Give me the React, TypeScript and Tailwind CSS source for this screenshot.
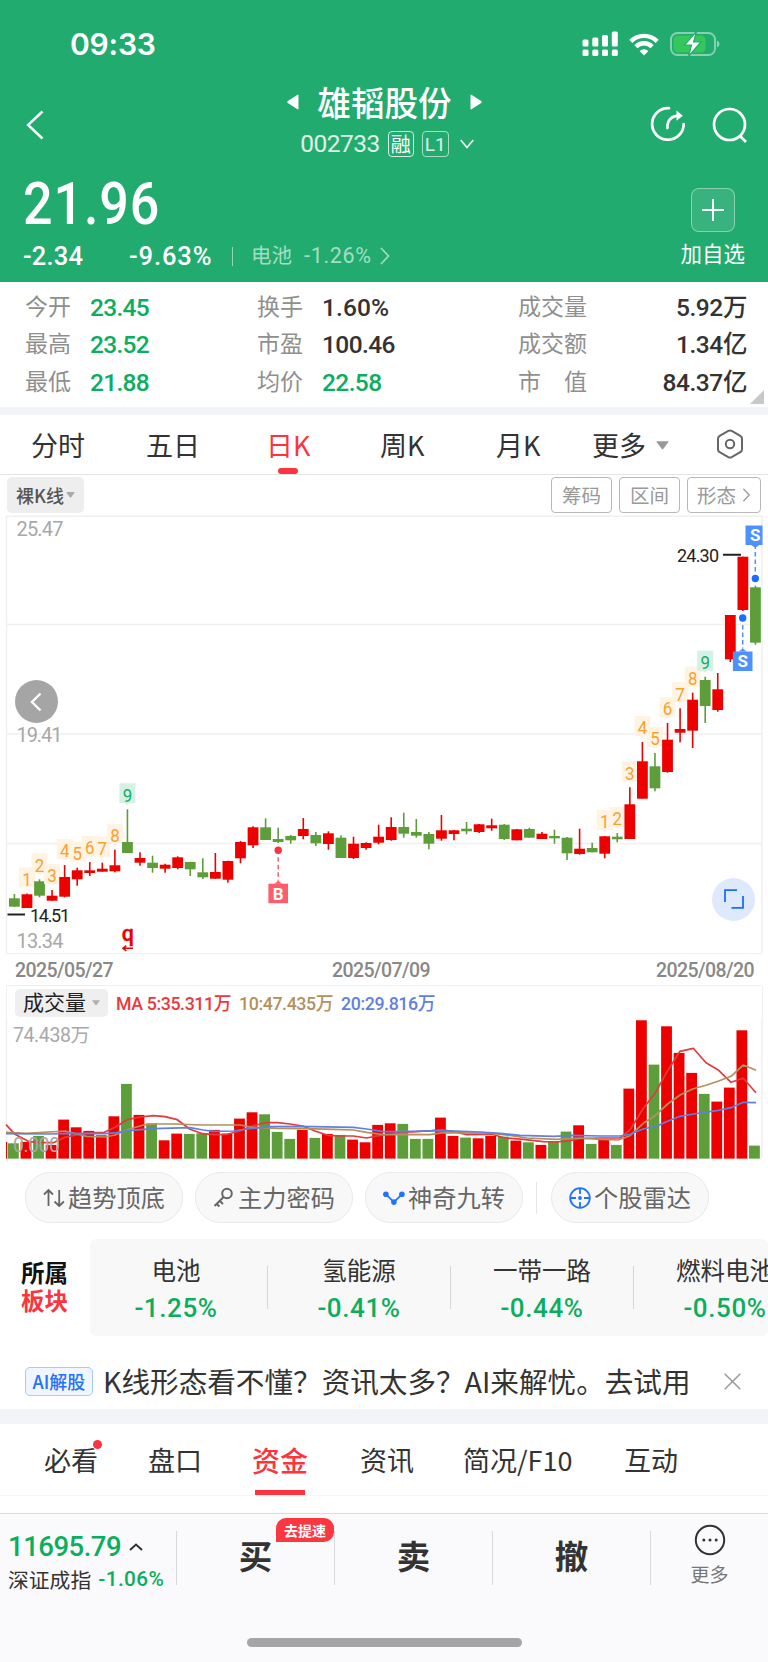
import type { ReactNode } from "react";
import clsx from "clsx";

type Candle = [
  color: "r" | "g",
  high: number,
  top: number,
  bottom: number,
  low: number,
  volume: number,
  count?: number,
];

// high / body top / body bottom / low / volume height, plus the nine-turn count
const candles: Candle[] = [
  ["g", 894, 898.3, 906.7, 907, 15.3],
  ["r", 893.5, 894.3, 908, 908, 16.7, 1],
  ["g", 879.3, 881.3, 895.7, 897.3, 22.7, 2],
  ["r", 890, 895.7, 900.7, 900.7, 13.7, 3],
  ["r", 865, 877, 896.7, 897.3, 39, 4],
  ["r", 867.7, 870.3, 879.3, 885.7, 31.3, 5],
  ["r", 862, 870.3, 873, 876, 27.7, 6],
  ["r", 862.7, 868.7, 871.7, 871.7, 23.3, 7],
  ["r", 849.7, 865.3, 871.3, 872.3, 42.3, 8],
  ["g", 809.3, 842, 853, 853, 74.7, 9],
  ["r", 852.3, 858, 862.7, 865.7, 43.7],
  ["g", 855.7, 862.7, 868, 872.7, 35.3],
  ["r", 863.7, 864.7, 868.7, 872.7, 18.3],
  ["r", 856.3, 857.3, 868, 869.3, 25],
  ["g", 861.7, 862, 869.3, 876, 24.7],
  ["g", 858.3, 872.3, 877.3, 879, 25.3],
  ["r", 853, 872, 878.7, 878.7, 28.7],
  ["r", 860.7, 861, 879.7, 882.7, 25],
  ["r", 841, 842, 858.3, 863.3, 40],
  ["r", 826.3, 827.3, 845.3, 848, 46.3],
  ["g", 818.3, 827.3, 840, 840, 44.3],
  ["g", 827.7, 839, 842, 843, 26.7],
  ["g", 835, 836, 840.3, 843.7, 19.7],
  ["r", 818, 829, 836, 839.3, 28.7],
  ["g", 832, 835, 843.3, 846, 20.7],
  ["r", 831.3, 833.3, 844, 849.7, 24.7],
  ["g", 835.3, 837.7, 858, 858, 23.7],
  ["r", 836.7, 843.7, 858, 859, 19],
  ["r", 842.3, 843, 848, 849.7, 16.3],
  ["r", 824.7, 836.7, 842.7, 844.3, 33.7],
  ["r", 817.3, 827, 840, 840.7, 35.3],
  ["g", 812.7, 827, 833.7, 837.7, 34.7],
  ["g", 819, 832, 835.7, 837.7, 19.7],
  ["g", 832, 834, 843.7, 849.3, 19.7],
  ["r", 815, 830.3, 838.7, 840.7, 41],
  ["r", 830, 830.3, 834, 840.3, 22.7],
  ["g", 822, 828.7, 831.3, 834.3, 21],
  ["r", 824, 824.3, 832, 833, 20.3],
  ["r", 818.7, 825.3, 828.3, 830.7, 22.7],
  ["g", 824, 824.7, 839, 840, 22],
  ["r", 829, 829.3, 840.3, 840.3, 18],
  ["g", 827.7, 829, 837.7, 837.7, 16.3],
  ["r", 832, 833.7, 839, 839, 13.7],
  ["g", 829.7, 836, 838.3, 843.7, 17.3],
  ["g", 837, 837.7, 853.3, 860, 27],
  ["r", 828.7, 848.7, 854, 854.7, 33.3],
  ["g", 842.7, 848, 852.3, 852.3, 14.7],
  ["r", 836, 836.3, 853.7, 858.3, 18.7, 1],
  ["g", 833, 836.7, 839.3, 842.3, 13.7, 2],
  ["r", 787.3, 804.3, 839, 839, 70, 3],
  ["r", 742, 761.3, 798.7, 798.7, 138.3, 4],
  ["g", 753, 766.3, 788.3, 791.3, 94, 5],
  ["r", 723, 739.7, 772, 772.7, 132.3, 6],
  ["r", 708.3, 729, 732.7, 742.3, 105.7, 7],
  ["r", 692.7, 699.7, 730.7, 748, 85.7, 8],
  ["g", 676.7, 680, 706, 723, 64.7, 9],
  ["r", 673, 689.3, 710, 711.7, 57],
  ["r", 615, 615, 659.3, 662, 71],
  ["r", 556.7, 556.7, 610, 611, 128.3],
  ["g", 585.7, 587.3, 642.7, 644.7, 13],
];

const ma5 =
  "6,1124.7 15,1134.3 28.3,1141.3 40,1142.7 53.3,1142.7 65,1137.3 77.3,1134.7 90,1132.7 103.3,1132.7 115,1127.3 127.3,1119.7 140,1117 153.3,1115.7 165,1116.7 177.3,1119.7 190,1129.3 202.7,1133.7 215,1134.7 227.3,1134.3 240,1131 252.3,1126 265,1122.7 277.7,1122.7 290,1124 302.7,1126 315,1131 327.7,1135.3 340,1136 353.3,1136 366.7,1138 378.3,1135.7 391.7,1134 400,1132.3 416,1131.7 431.7,1130.7 441.7,1129.7 455,1132 466.7,1134.7 491.7,1134.3 505,1138 523.3,1139.3 543.3,1141.7 556.7,1142 570,1140.7 580,1138.7 600,1138 620,1138 630,1130 642.7,1109.3 655,1093.3 667.7,1070.7 680,1051.3 693.3,1048.3 706,1062.7 718.7,1070.3 731,1082.3 743.3,1078.3 756,1092.7";
const ma10 =
  "6,1132.3 26.7,1133.3 65,1131 86.7,1136.3 105,1137 115,1135 127.3,1129.7 143.3,1125 156.7,1124 176.7,1124 200,1125 240,1125 252.3,1127.3 276.7,1128.3 306.7,1128.7 333.3,1129.3 353.3,1130 366.7,1132.3 383.3,1134.7 400,1134.3 430,1134.7 443.3,1132.7 491.7,1133.3 510,1135.3 526.7,1138 556.7,1139.3 580,1138 600,1139.3 618.3,1140 630,1135.7 643.3,1123.3 655,1115.7 667.7,1104 680,1095 693.3,1088.7 706,1085.3 718.7,1081 731,1076.3 743.3,1065 756,1070.3";
const ma20 =
  "6,1133.7 50,1134 66.7,1133.3 105,1133.7 116.7,1132.7 128.3,1130.7 153.3,1128.7 190,1127.7 203.3,1130 213.3,1131.3 233.3,1131 246.7,1129 270,1126.7 300,1126.3 353.3,1127.3 366.7,1129 383.3,1131.7 400,1131.7 443.3,1130.7 480,1132 500,1133.3 520,1135.3 553.3,1136.3 573.3,1135.3 600,1136 620,1136 630,1134.3 643.3,1129 656.7,1126 668.3,1121 680,1116.3 700,1113 718.3,1110.3 731,1107.7 743.3,1102.3 756,1102.7";

const fill = { r: "#ec0000", g: "#5d9e3b" };
const din = "font-[Roboto,'Noto_Sans_CJK_SC',sans-serif]";

function Caret({ className }: { className?: string }) {
  return (
    <svg viewBox="0 0 12 8" className={className} fill="currentColor">
      <path d="M1.2 0h9.6q1.2 0 .5 1L6.8 7q-.8 1-1.6 0L.7 1Q0 0 1.2 0z" />
    </svg>
  );
}

function ChevronRight({ className }: { className?: string }) {
  return (
    <svg viewBox="0 0 10 18" className={className} fill="none" stroke="currentColor" strokeWidth="1.6">
      <path d="M1 1l7.5 8L1 17" />
    </svg>
  );
}

function StatusBar() {
  return (
    <div className="flex h-[88px] items-center justify-between pl-[70px] pr-[47px]">
      <span className="font-[Inter,sans-serif] text-[30px] font-semibold tracking-[-0.2px]">
        09:33
      </span>
      <div className="flex items-center">
        <svg width="37" height="26" viewBox="0 0 37 26" fill="#fff">
          <rect x="0.5" y="8.5" width="6" height="7" rx="1.5" />
          <rect x="10.3" y="6.5" width="6" height="9" rx="1.5" />
          <rect x="20" y="4" width="6" height="11.5" rx="1.5" />
          <rect x="29.8" y="0.5" width="6" height="15" rx="1.5" />
          <rect x="0.5" y="18.5" width="6" height="6.5" rx="1.5" />
          <rect x="10.3" y="18.5" width="6" height="6.5" rx="1.5" />
          <rect x="20" y="18.5" width="6" height="6.5" rx="1.5" />
          <rect x="29.8" y="18.5" width="6" height="6.5" rx="1.5" />
        </svg>
        <svg width="30" height="23" viewBox="0 0 30 23" fill="none" stroke="#fff" strokeWidth="4.4" className="ml-[10px]">
          <path d="M1.8 8.4a18.6 18.6 0 0 1 26.4 0" />
          <path d="M6.9 13.7a11.4 11.4 0 0 1 16.2 0" />
          <path d="M15 22.6l4.4-4.6a6.3 6.3 0 0 0-8.8 0z" fill="#fff" stroke="none" />
        </svg>
        <svg width="51" height="26" viewBox="0 0 51 26" className="ml-[11px]">
          <rect x="1" y="2" width="44" height="22" rx="6.5" fill="none" stroke="#fff" strokeOpacity=".45" strokeWidth="2" />
          <rect x="3.5" y="4.5" width="32" height="17" rx="4.5" fill="#34c759" />
          <path d="M47 9.5q2.5 1 2.5 3.5T47 16.5z" fill="#fff" fillOpacity=".5" />
          <path d="M26.5.5L14.5 14.2h7L18.5 25.5 31 11h-7.4z" fill="#fff" stroke="#22ab6f" strokeWidth="1.2" />
        </svg>
      </div>
    </div>
  );
}

function Header() {
  return (
    <header className="h-[282px] shrink-0 bg-[#22ab6f] text-white">
      <StatusBar />
      <div className="flex h-[79px] items-start justify-between pl-[26px] pr-[20px]">
        <svg width="18" height="30" viewBox="0 0 18 30" fill="none" stroke="#fff" strokeWidth="2.4" className="mt-[22px]">
          <path d="M16.5 1.5L2 15l14.5 13.5" />
        </svg>
        <div className="-mt-[7px] ml-[75px] flex flex-col items-center">
          <div className="flex h-[41px] items-center">
            <svg width="12" height="16" viewBox="0 0 12 16" fill="#fff">
              <path d="M11.5 1.5v13q0 1.5-1.3.6L.8 9q-1-1 0-2L10.2.9q1.3-.9 1.3.6z" />
            </svg>
            <h1 className="mx-[18px] text-[33.6px] font-medium leading-none">雄韬股份</h1>
            <svg width="12" height="16" viewBox="0 0 12 16" fill="#fff">
              <path d="M.5 1.5v13q0 1.5 1.3.6L11.2 9q1-1 0-2L1.8.9Q.5 0 .5 1.5z" />
            </svg>
          </div>
          <div className="ml-[5px] mt-[8px] flex h-[28px] items-center">
            <span className={clsx(din, "text-[24.5px] leading-none tracking-[-0.5px] text-white/85")}>
              002733
            </span>
            <span className="ml-[8px] grid h-[26px] w-[26px] place-items-center rounded border border-white/80 text-[20px] leading-none">
              融
            </span>
            <span className={clsx(din, "ml-[8px] grid h-[26px] w-[27px] place-items-center rounded border border-white/60 text-[19px] leading-none text-white/85")}>
              L1
            </span>
            <svg width="14" height="10" viewBox="0 0 14 10" fill="none" stroke="#fff" strokeWidth="1.5" className="ml-[11px]">
              <path d="M.7 1L7 8.5 13.3 1" />
            </svg>
          </div>
        </div>
        <div className="mt-[18px] flex gap-[26px]">
          <svg width="36" height="36" viewBox="0 0 36 36" fill="none" stroke="#fff" strokeWidth="2.7">
            <path d="M19 2.2A15.8 15.8 0 1 0 33.7 18" strokeLinecap="round" />
            <path d="M17.5 22c-.7-7.5 4-12.3 12-12.3" strokeLinecap="round" />
            <path d="M26.5 4.5l6.3 5.2-6.3 5z" fill="#fff" stroke="none" />
          </svg>
          <svg width="36" height="38" viewBox="0 0 36 38" fill="none" stroke="#fff" strokeWidth="2.7">
            <circle cx="17.5" cy="18.5" r="15.5" />
            <path d="M27.5 29.5l6.5 6.5" />
          </svg>
        </div>
      </div>
      <div className="flex justify-between pl-[23px] pr-[23px]">
        <div>
          <div className={clsx(din, "mt-[6px] h-[61px] w-[150px] origin-left scale-x-[0.89] text-[58.5px] font-medium leading-[63px] tracking-[1px]")}>
            21.96
          </div>
          <div className={clsx(din, "mt-[8px] flex h-[28px] items-center")}>
            <span className="w-[106px] text-[25.5px] font-medium tracking-[0.2px]">-2.34</span>
            <span className="w-[103px] text-[25.5px] font-medium tracking-[0.9px]">-9.63%</span>
            <span className="h-[19px] w-px bg-white/50" />
            <span className="ml-[18px] text-[20.5px] leading-none text-white/60">电池</span>
            <span className="ml-[12px] text-[21.5px] tracking-[0.7px] text-white/60">-1.26%</span>
            <ChevronRight className="ml-[8px] h-[18px] w-[10px] text-white/60" />
          </div>
        </div>
        <div className="flex flex-col items-center pt-[21px]">
          <div className="grid h-[44px] w-[44px] place-items-center rounded-lg border border-white/40 bg-white/10">
            <svg width="22" height="22" viewBox="0 0 22 22" stroke="#fff" strokeWidth="2">
              <path d="M11 0v22M0 11h22" />
            </svg>
          </div>
          <span className="mt-[10px] text-[21.5px] leading-[22px]">加自选</span>
        </div>
      </div>
    </header>
  );
}

const stats = [
  ["今开", "23.45", "换手", "1.60%", "成交量", "5.92万"],
  ["最高", "23.52", "市盈", "100.46", "成交额", "1.34亿"],
  ["最低", "21.88", "均价", "22.58", "市 值", "84.37亿"],
];

function Stats() {
  return (
    <section className="relative h-[125px] shrink-0 pl-[25px] pr-[21px] pt-[6px]">
      {stats.map((row, i) => (
        <div key={row[0]} className="flex h-[37.5px] items-center text-[23px] leading-none text-[#333]">
          <span className="-mt-[3px] w-[65px] text-[#8f8f8f]">{row[0]}</span>
          <span className={clsx(din, "mt-[2px] w-[167px] text-[24.5px] font-medium tracking-[-0.7px] text-[#0aae5e]")}>
            {row[1]}
          </span>
          <span className="-mt-[3px] w-[65px] text-[#8f8f8f]">{row[2]}</span>
          <span
            className={clsx(
              din,
              "mt-[2px] w-[196px] text-[24.5px] font-medium",
              i === 0 ? "tracking-[0.1px]" : "tracking-[-0.6px]",
              i === 2 && "text-[#0aae5e]",
            )}
          >
            {row[3]}
          </span>
          <span className="-mt-[3px] flex w-[69px] justify-between text-[#8f8f8f]">
            {row[4].split(" ").map((part) => (
              <span key={part}>{part}</span>
            ))}
          </span>
          <span className={clsx(din, "mt-[2px] flex-1 text-right text-[24.5px] font-medium tracking-[-0.4px]")}>
            {row[5]}
          </span>
        </div>
      ))}
      <svg width="14" height="14" viewBox="0 0 14 14" className="absolute bottom-[3px] right-[4px]">
        <path d="M14 0v14H0z" fill="#c8c8c8" />
      </svg>
    </section>
  );
}

function PeriodTabs() {
  return (
    <nav className="flex h-[60px] shrink-0 items-center border-b border-[#e4e4e4] pb-px pl-[31px] text-[27px] leading-none text-[#333]">
      <span className="w-[115px]">分时</span>
      <span className="w-[120px]">五日</span>
      <span className="relative flex h-full w-[114px] items-center text-[#fc3440]">
        日K
        <span className="absolute -bottom-px left-[12px] h-[6px] w-[20px] rounded-[3px] bg-[#fc3440]" />
      </span>
      <span className="w-[116px]">周K</span>
      <span className="w-[96px]">月K</span>
      <span>更多</span>
      <Caret className="ml-[10px] mt-[2px] h-[9px] w-[13px] text-[#999]" />
      <svg width="28" height="30" viewBox="0 0 28 30" fill="none" stroke="#666" strokeWidth="2" className="ml-[47px]">
        <path d="M12.3 1.9q1.7-.9 3.4 0l8.6 4.9q1.7 1 1.7 3v10.4q0 2-1.7 3l-8.6 4.9q-1.7.9-3.4 0l-8.6-4.9q-1.7-1-1.7-3V9.8q0-2 1.7-3z" />
        <circle cx="14" cy="15" r="4.2" />
      </svg>
    </nav>
  );
}

function ToolButton({ children, className }: { children: ReactNode; className: string }) {
  return (
    <button
      type="button"
      className={clsx(
        "flex h-[36px] items-center justify-center rounded-[4px] border border-[#b8b8b8] text-[19.5px] leading-none text-[#999]",
        className,
      )}
    >
      {children}
    </button>
  );
}

function ChartToolbar() {
  return (
    <div className="flex h-[40px] shrink-0 items-start pl-[7px] pr-[7px] pt-[2px]">
      <button type="button" className="mr-auto flex h-[36px] w-[77px] items-center justify-center rounded-[5px] bg-[#eeeeee] text-[18px] font-medium leading-none text-[#555]">
        裸K线
        <Caret className="ml-[2px] h-[6px] w-[9px] text-[#aaa]" />
      </button>
      <ToolButton className="w-[61px]">筹码</ToolButton>
      <ToolButton className="ml-[7px] w-[61px]">区间</ToolButton>
      <ToolButton className="ml-[7px] w-[74px]">
        形态
        <ChevronRight className="ml-[6px] h-[14px] w-[9px]" />
      </ToolButton>
    </div>
  );
}

function TradeMark({
  x,
  y,
  dot,
  letter,
  color,
  dotColor,
}: {
  x: number;
  y: number;
  dot: number;
  letter: string;
  color: string;
  dotColor: string;
}) {
  const below = y > dot;
  const edge = below ? y - 3 : y + 22;
  const box = x - 9.8;
  return (
    <g>
      <path
        d={`M${x} ${dot + (below ? 7 : -7)}V${edge}`}
        stroke={color}
        strokeWidth="1.5"
        strokeDasharray="4.5 3"
      />
      <circle cx={x} cy={dot} r="3.7" fill={dotColor} />
      <rect x={box} y={y} width={Math.min(19.6, 762.5 - box)} height="19.5" fill={color} />
      <path
        d={below ? `M${x - 4} ${y}l4-3 4 3z` : `M${x - 4} ${y + 19.5}l4 3 4-3z`}
        fill={color}
      />
      <text x={x} y={y + 15.8} fontSize="17" fontWeight="700" fill="#fff" textAnchor="middle">
        {letter}
      </text>
    </g>
  );
}

function CandleChart() {
  return (
    <div className="relative h-[438px] shrink-0">
      <svg width="768" height="438" viewBox="0 515 768 438" className="block" fontFamily="Roboto, sans-serif">
        <g stroke="#f0f0f0" strokeWidth="1.5">
          <path d="M6 516.2H762M6 624.5H762M6 734H762M6 843.5H762M6.5 516V953M762 516V953" />
        </g>
        <g fontSize="20" fill="#a8a8a8">
          <text x="16.5" y="535.5" textLength="47">25.47</text>
          <text x="16.5" y="741.5" textLength="46">19.41</text>
          <text x="16.5" y="948" textLength="47">13.34</text>
        </g>
        {candles.map(([color, high, top, bottom, low, , count], i) => {
          const x = 14.4 + i * 12.56;
          return (
            <g key={i}>
              {count && (
                <>
                  <path
                    d={`M${x - 8} ${high - 26}h16v20h-5.5l-2.5 2-2.5-2h-5.5z`}
                    fill={count === 9 ? "#d5f1e4" : "#fff3e4"}
                  />
                  <text
                    x={x}
                    y={high - 7.8}
                    fontSize="18.5"
                    textAnchor="middle"
                    textLength="9.5"
                    lengthAdjust="spacingAndGlyphs"
                    fill={count === 9 ? "#12ad66" : "#faa02d"}
                  >
                    {count}
                  </text>
                </>
              )}
              <rect x={x - 0.8} y={high} width="1.6" height={low - high} fill={fill[color]} />
              <rect x={x - 5.4} y={top} width="10.8" height={bottom - top} fill={fill[color]} />
            </g>
          );
        })}
        <g fontSize="18" fill="#222">
          <text x="30" y="921.5" textLength="40">14.51</text>
          <text x="677" y="562" textLength="42">24.30</text>
          <path d="M7.5 914.5H25M723 554.8h18" stroke="#222" strokeWidth="2" />
        </g>
        <TradeMark x={278.2} y={883.7} dot={850.3} letter="B" color="#fb5f6b" dotColor="#f8333f" />
        <TradeMark x={742.7} y={651.5} dot={618} letter="S" color="#4f91fb" dotColor="#1a6dff" />
        <TradeMark x={755.3} y={525.5} dot={578.5} letter="S" color="#4f91fb" dotColor="#1a6dff" />
        <text x="127.8" y="940.5" fontSize="21.5" fontWeight="500" fill="#ec0000" stroke="#ec0000" strokeWidth=".4" textAnchor="middle">
          q
        </text>
        <path d="M133 948.3h-10m3.3-2.6l-3.3 2.6 3.3 2.6" fill="none" stroke="#ec0000" strokeWidth="1.5" />
      </svg>
      <button type="button" className="absolute left-[14.5px] top-[165px] grid h-[43px] w-[43px] place-items-center rounded-full bg-[#a5a5a5]">
        <svg width="12" height="20" viewBox="0 0 12 20" fill="none" stroke="#fff" strokeWidth="2.4">
          <path d="M10.5 1.5L2 10l8.5 8.5" />
        </svg>
      </button>
      <button type="button" className="absolute left-[712px] top-[362.5px] grid h-[43px] w-[43px] place-items-center rounded-full bg-[#dfe9fe]">
        <svg width="20" height="20" viewBox="0 0 20 20" fill="none" stroke="#1a6dff" strokeWidth="1.8">
          <path d="M1 13V1.2h12M19 7v11.8H7.5" />
        </svg>
      </button>
    </div>
  );
}

function VolumePanel() {
  return (
    <>
      <div className={clsx(din, "mx-[6px] flex h-[33px] shrink-0 items-center border-y-[1.5px] border-[#f0f0f0] pl-[9px] pr-[8px] pt-[2px] text-[19.5px] font-medium tracking-[-0.6px] text-[#888]")}>
        <span className="w-[317px]">2025/05/27</span>
        <span>2025/07/09</span>
        <span className="ml-auto">2025/08/20</span>
      </div>
      <div className={clsx(din, "ml-[6px] mr-[5px] flex h-[34px] shrink-0 items-center border-x-[1.5px] border-[#f0f0f0] text-[17.8px] font-medium leading-none tracking-[-0.4px]")}>
        <button type="button" className="ml-[8px] mr-[8px] flex h-[28px] w-[93px] items-center justify-center rounded-[5px] bg-[#efefef] text-[21px] font-normal tracking-normal text-[#222]">
          成交量
          <Caret className="ml-[6px] h-[6px] w-[8px] text-[#b0b0b0]" />
        </button>
        <span className="mt-[2px] w-[123px] whitespace-nowrap text-[#e9393c]">MA 5:35.311万</span>
        <span className="mt-[2px] w-[102px] whitespace-nowrap text-[#b3905c]">10:47.435万</span>
        <span className="mt-[2px] text-[#5f7fe3]">20:29.816万</span>
      </div>
      <svg width="768" height="140" viewBox="0 1020 768 140" className="block shrink-0" fontFamily="Roboto, 'Noto Sans CJK SC', sans-serif">
        <path d="M6.5 1020V1158.6M762 1020V1158.6M6 1158.8H762" stroke="#f0f0f0" strokeWidth="1.5" fill="none" />
        <rect x="6" y="1142" width="1.2" height="16.6" fill="#ec0000" />
        {candles.map(([color, , , , , volume], i) => (
          <rect
            key={i}
            x={8 + i * 12.56}
            y={1158.6 - volume}
            width="10.8"
            height={volume}
            fill={fill[color]}
          />
        ))}
        <g fill="none" strokeWidth="1.7" strokeLinejoin="round">
          <polyline points={ma5} stroke="#e33a3c" />
          <polyline points={ma10} stroke="#b3905c" />
          <polyline points={ma20} stroke="#5f7fe3" />
        </g>
        <g fontSize="19.5" fill="#a8a8a8">
          <text x="13" y="1041.5" textLength="77">74.438万</text>
          <text x="13" y="1152" textLength="47">0.000</text>
        </g>
      </svg>
    </>
  );
}

function Chip({ icon, label }: { icon: ReactNode; label: string }) {
  return (
    <button type="button" className="flex h-[51px] w-[158px] items-center justify-center gap-[3px] rounded-full border border-[#e9e9e9] bg-[#f8f8f8] text-[24.2px] leading-none text-[#666]">
      <svg width="22" height="22" viewBox="0 0 22 22" fill="none" strokeWidth="1.8" className="shrink-0">
        {icon}
      </svg>
      {label}
    </button>
  );
}

function ChipRow() {
  return (
    <div className="flex h-[75px] shrink-0 items-center gap-[12px] pl-[25px]">
      <Chip
        label="趋势顶底"
        icon={<path d="M1 7.5L5.500 3 10 7.500M5.500 3v16M11.500 14.500l4.700 4.500 4.700-4.500M16.200 19V3" stroke="#666" />}
      />
      <Chip
        label="主力密码"
        icon={
          <g stroke="#666" strokeWidth="2">
            <circle cx="14" cy="6.5" r="4.8" />
            <path d="M10.6 10L1.5 19M6.8 14l3.2 3M3.8 17l2.6 2.5" />
          </g>
        }
      />
      <Chip
        label="神奇九转"
        icon={
          <>
            <path d="M2.9 7.3l8 7.8 8-7.8" stroke="#2471fb" strokeWidth="1.8" />
            <g fill="#2471fb">
              <circle cx="2.9" cy="7.3" r="2.8" />
              <circle cx="10.9" cy="15.1" r="2.8" />
              <circle cx="18.9" cy="7.3" r="2.8" />
            </g>
          </>
        }
      />
      <span className="ml-px mr-[2px] h-[32px] w-px bg-[#e6e6e6]" />
      <Chip
        label="个股雷达"
        icon={
          <>
            <circle cx="11" cy="11" r="9.8" stroke="#2471fb" />
            <path d="M11 1.5V7M11 15v5.5M1.5 11H7M15 11h5.5" stroke="#2471fb" />
            <circle cx="11" cy="11" r="1.9" fill="#2471fb" />
          </>
        }
      />
    </div>
  );
}

const sectors = [
  { name: "电池", change: "-1.25%" },
  { name: "氢能源", change: "-0.41%" },
  { name: "一带一路", change: "-0.44%" },
  { name: "燃料电池", change: "-0.50%" },
];

function Sectors() {
  return (
    <section className="mt-[4px] flex h-[97px] shrink-0 overflow-hidden">
      <div className="flex w-[90px] shrink-0 flex-col justify-center pb-[3px] pl-[21px] text-[23.5px] font-bold leading-[28px] text-[#111]">
        <span>所属</span>
        <span className="text-[#fc3440]">板块</span>
      </div>
      <div className="flex w-[678px] shrink-0 overflow-hidden rounded-[6px] bg-[#f8f8f8]">
        {sectors.map((s, i) => (
          <div key={s.name} className="flex shrink-0 items-center">
            {i > 0 && <span className="-mt-[1px] h-[43px] w-px bg-[#d6d6d6]" />}
            <div className={clsx("flex flex-col items-center pt-[2px]", i === 0 ? "mr-[5px] w-[172px]" : "w-[182px]")}>
              <span className="text-[24.5px] leading-[36px] text-[#333]">{s.name}</span>
              <span className={clsx(din, "mt-[2px] text-[26px] font-medium leading-[36px] tracking-[0.6px] text-[#0aae5e]")}>
                {s.change}
              </span>
            </div>
          </div>
        ))}
      </div>
    </section>
  );
}

function AiBanner() {
  return (
    <div className="flex h-[73px] shrink-0 items-center pl-[25px] pr-[27px] pt-[17px]">
      <span className="grid h-[29px] w-[68px] place-items-center rounded-[5px] border border-[#a8c8ff] bg-[#f0f6ff] text-[18px] font-medium leading-none text-[#2471fb]">
        AI解股
      </span>
      <span className="ml-[10px] whitespace-nowrap text-[28.6px] leading-none text-[#333]">
        K线形态看不懂？资讯太多？AI来解忧。去试用
      </span>
      <svg width="17" height="17" viewBox="0 0 17 17" stroke="#999" strokeWidth="1.5" className="ml-auto">
        <path d="M.7.7l15.6 15.6M16.3.7L.7 16.3" />
      </svg>
    </div>
  );
}

function DetailTabs() {
  return (
    <nav className="flex h-[72px] shrink-0 items-center border-b border-[#f4f4f4] pl-[44px] text-[27px] leading-none text-[#333]">
      <span className="relative w-[104px]">
        必看
        <span className="absolute -top-[6px] left-[49px] h-[9px] w-[9px] rounded-full bg-[#fc3440]" />
      </span>
      <span className="w-[104px]">盘口</span>
      <span className="relative flex h-[72px] w-[108px] items-center text-[28px] font-medium text-[#fc3440]">
        资金
        <span className="absolute bottom-px left-[3px] h-[5px] w-[50px] bg-[#fc3440]" />
      </span>
      <span className="w-[103px]">资讯</span>
      <span className="w-[161px]">简况/F10</span>
      <span>互动</span>
    </nav>
  );
}

function Footer() {
  return (
    <footer className="flex flex-1 flex-col border-t border-[#dcdcdf] bg-[#fafafc]">
      <div className="flex h-[88px] items-center">
        <div className="w-[176px] pl-[8px] pt-[8px]">
          <div className={clsx(din, "flex h-[34px] items-center text-[27.5px] font-medium leading-none tracking-[-0.5px] text-[#0aae5e]")}>
            11695.79
            <svg width="14" height="8" viewBox="0 0 14 8" fill="none" stroke="#333" strokeWidth="2" className="ml-[8px]">
              <path d="M1 7l6-5.5L13 7" />
            </svg>
          </div>
          <div className="flex h-[30px] items-center text-[20.8px] leading-none text-[#333]">
            深证成指
            <span className={clsx(din, "ml-[7px] text-[20.8px] font-medium tracking-[0.4px] text-[#0aae5e]")}>-1.06%</span>
          </div>
        </div>
        {["买", "卖", "撤"].map((label) => (
          <div key={label} className="relative flex h-[54px] w-[158px] items-center justify-center border-l border-[#d9d9dc] pb-[7px] text-[33.5px] font-bold leading-none text-[#333]">
            {label}
            {label === "买" && (
              <span className="absolute -top-[13px] right-0 grid h-[24px] w-[58px] place-items-center rounded-[10px] rounded-bl-none bg-[#fb3742] text-[14px] leading-none text-white">
                去提速
              </span>
            )}
          </div>
        ))}
        <div className="flex h-[54px] flex-1 flex-col items-center justify-center border-l border-[#d9d9dc] pb-[7px]">
          <svg width="32" height="32" viewBox="0 0 32 32" fill="none" stroke="#333" strokeWidth="2" className="shrink-0">
            <circle cx="16" cy="16" r="14.2" />
            <g fill="#333" stroke="none">
              <circle cx="9.8" cy="16" r="1.5" />
              <circle cx="16" cy="16" r="1.5" />
              <circle cx="22.2" cy="16" r="1.5" />
            </g>
          </svg>
          <span className="mt-[7px] text-[19px] leading-[22px] text-[#777]">更多</span>
        </div>
      </div>
      <div className="mx-auto mt-[36px] h-[9px] w-[275px] rounded-full bg-[#a5a5a7]" />
    </footer>
  );
}

export default function App() {
  return (
    <div className="flex h-[1662px] w-[768px] flex-col overflow-hidden bg-white font-['Noto_Sans_CJK_SC',sans-serif]">
      <Header />
      <Stats />
      <div className="h-[8px] shrink-0 bg-[#f3f4f9]" />
      <PeriodTabs />
      <ChartToolbar />
      <CandleChart />
      <VolumePanel />
      <ChipRow />
      <Sectors />
      <AiBanner />
      <div className="h-[15px] shrink-0 bg-[#f3f4f9]" />
      <DetailTabs />
      <div className="h-[17px] shrink-0" />
      <Footer />
    </div>
  );
}
